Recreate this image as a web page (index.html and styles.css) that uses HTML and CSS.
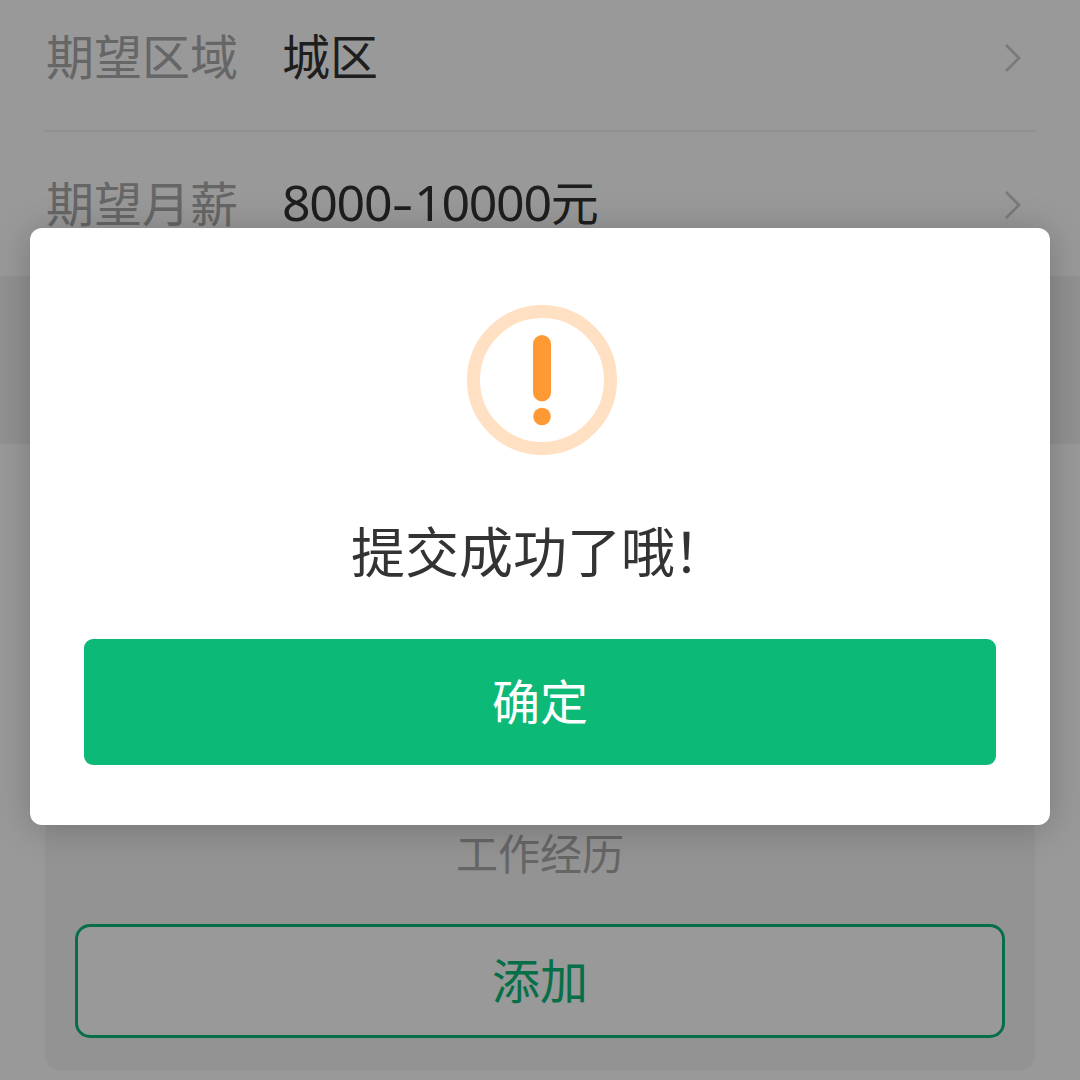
FILE: index.html
```html
<!DOCTYPE html>
<html lang="zh-CN">
<head>
<meta charset="utf-8">
<title>求职意向</title>
<link rel="stylesheet" href="styles.css">
</head>
<body>
<main class="page">
  <section class="fields">
    <div class="field">
      <span class="label">期望区域</span>
      <span class="value">城区</span>
      <svg class="chevron" viewBox="0 0 18 30"><path d="M2 2 L15 15 L2 28"/></svg>
    </div>
    <div class="field">
      <span class="label">期望月薪</span>
      <span class="value"><span class="num">8000</span><span class="dash">-</span><span class="num">10000</span>元</span>
      <svg class="chevron" viewBox="0 0 18 30"><path d="M2 2 L15 15 L2 28"/></svg>
    </div>
  </section>
  <section class="history">
    <div class="card">
      <p class="card-title">工作经历</p>
      <button class="add">添加</button>
    </div>
  </section>
</main>
<div class="overlay">
  <div class="dialog">
    <svg class="warn" viewBox="0 0 150 150">
      <circle class="ring" cx="75" cy="75" r="68.500"/>
      <rect class="mark" x="66" y="30" width="18" height="66.500" rx="9"/>
      <circle class="mark" cx="75" cy="111.500" r="8.800"/>
    </svg>
    <p class="message">提交成功了哦<span class="bang">！</span></p>
    <button class="confirm">确定</button>
  </div>
</div>
</body>
</html>
```

FILE: styles.css
```css
* {
  box-sizing: border-box;
}

body {
  margin: 0;
  width: 1080px;
  height: 1080px;
  overflow: hidden;
  background: #fff;
  font-family: "Noto Sans CJK SC", sans-serif;
}

p {
  margin: 0;
}

button {
  padding: 0 0 6px;
  font-family: inherit;
}

.page {
  height: 1080px;
  display: flex;
  flex-direction: column;
  overflow: hidden;
}

.fields {
  height: 276px;
  padding: 0 44px;
  flex: none;
}

.field {
  height: 132px;
  padding: 0 14px 22px 2px;
  display: flex;
  align-items: center;
  border-bottom: 2px solid #f0f0f0;
  font-size: 48px;
  line-height: 72px;
}

.field + .field {
  height: 144px;
  padding-bottom: 6px;
  border-bottom: 0;
}

.label {
  width: 236px;
  color: #aaa;
}

.value {
  flex: 1;
  display: flex;
  align-items: baseline;
  color: #333;
}

.num {
  font-family: "Noto Sans", sans-serif;
  font-size: 50px;
  letter-spacing: -1.300px;
}

.dash {
  width: 23px;
  font-family: "Noto Sans", sans-serif;
  text-align: center;
  transform: scaleX(1.400);
}

.chevron {
  width: 18px;
  height: 30px;
  margin-top: 7px;
  fill: none;
  stroke: #ccc;
  stroke-width: 2.800;
}

.history {
  flex: 1;
  padding: 168px 45px 10px;
  background: linear-gradient(#f2f2f2 168px, #fff 168px);
}

.card {
  height: 626px;
  padding: 0 30px 32px;
  display: flex;
  flex-direction: column;
  justify-content: flex-end;
  background: #f6f6f6;
  border-radius: 14px;
}

.card-title {
  margin-bottom: 40px;
  color: #aaa;
  font-size: 42px;
  line-height: 64px;
  text-align: center;
}

.add {
  height: 114px;
  flex: none;
  border: 3px solid #0db977;
  border-radius: 15px;
  background: #fff;
  color: #0db977;
  font-size: 48px;
}

.overlay {
  position: absolute;
  inset: 0;
  padding: 228px 30px 0;
  background: rgba(0, 0, 0, 0.4);
}

.dialog {
  height: 597px;
  padding: 77px 54px 60px;
  display: flex;
  flex-direction: column;
  align-items: center;
  background: #fff;
  border-radius: 12px;
  box-shadow: 0 3px 36px rgba(0, 0, 0, 0.22);
}

.warn {
  width: 150px;
  height: 150px;
  margin-left: 3px;
}

.ring {
  fill: none;
  stroke: #ffe0c2;
  stroke-width: 13;
}

.mark {
  fill: #ff9933;
}

.message {
  margin-top: 55px;
  color: #333;
  font-size: 54px;
  line-height: 80px;
}

.bang {
  margin: 0 2px 0 -2px;
}

.confirm {
  width: 100%;
  height: 126px;
  margin-top: auto;
  border: 0;
  border-radius: 9px;
  background: #0db977;
  color: #fff;
  font-size: 48px;
}
```
